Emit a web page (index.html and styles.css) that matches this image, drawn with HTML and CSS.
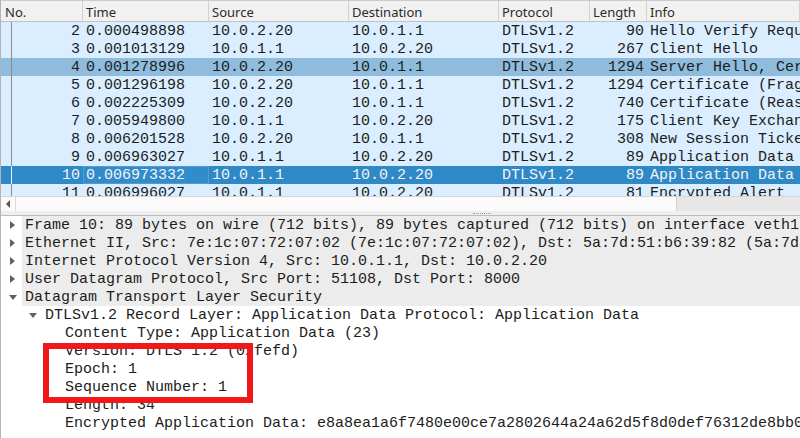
FILE: index.html
```html
<!DOCTYPE html>
<html>
<head>
<meta charset="utf-8">
<link rel="stylesheet" href="styles.css">
</head>
<body>
<div class="app">
  <div class="plist">
    <div class="prow head">
      <div class="c">No.</div><div class="c">Time</div><div class="c">Source</div><div class="c">Destination</div><div class="c">Protocol</div><div class="c">Length</div><div class="c">Info</div>
    </div>
    <div class="prow"><div class="c r no">2</div><div class="c">0.000498898</div><div class="c">10.0.2.20</div><div class="c">10.0.1.1</div><div class="c">DTLSv1.2</div><div class="c r">90</div><div class="c">Hello Verify Request</div></div>
    <div class="prow"><div class="c r no">3</div><div class="c">0.001013129</div><div class="c">10.0.1.1</div><div class="c">10.0.2.20</div><div class="c">DTLSv1.2</div><div class="c r">267</div><div class="c">Client Hello</div></div>
    <div class="prow hover"><div class="c r no">4</div><div class="c">0.001278996</div><div class="c">10.0.2.20</div><div class="c">10.0.1.1</div><div class="c">DTLSv1.2</div><div class="c r">1294</div><div class="c">Server Hello, Certificate (Fragment)</div></div>
    <div class="prow"><div class="c r no">5</div><div class="c">0.001296198</div><div class="c">10.0.2.20</div><div class="c">10.0.1.1</div><div class="c">DTLSv1.2</div><div class="c r">1294</div><div class="c">Certificate (Fragment)</div></div>
    <div class="prow"><div class="c r no">6</div><div class="c">0.002225309</div><div class="c">10.0.2.20</div><div class="c">10.0.1.1</div><div class="c">DTLSv1.2</div><div class="c r">740</div><div class="c">Certificate (Reassembled)</div></div>
    <div class="prow"><div class="c r no">7</div><div class="c">0.005949800</div><div class="c">10.0.1.1</div><div class="c">10.0.2.20</div><div class="c">DTLSv1.2</div><div class="c r">175</div><div class="c">Client Key Exchange, Change Cipher Spec</div></div>
    <div class="prow"><div class="c r no">8</div><div class="c">0.006201528</div><div class="c">10.0.2.20</div><div class="c">10.0.1.1</div><div class="c">DTLSv1.2</div><div class="c r">308</div><div class="c">New Session Ticket, Change Cipher Spec</div></div>
    <div class="prow"><div class="c r no">9</div><div class="c">0.006963027</div><div class="c">10.0.1.1</div><div class="c">10.0.2.20</div><div class="c">DTLSv1.2</div><div class="c r">89</div><div class="c">Application Data</div></div>
    <div class="prow sel"><div class="c r no">10</div><div class="c focus">0.006973332</div><div class="c">10.0.1.1</div><div class="c">10.0.2.20</div><div class="c">DTLSv1.2</div><div class="c r">89</div><div class="c">Application Data</div></div>
    <div class="prow"><div class="c r no">11</div><div class="c">0.006996027</div><div class="c">10.0.1.1</div><div class="c">10.0.2.20</div><div class="c">DTLSv1.2</div><div class="c r">81</div><div class="c">Encrypted Alert</div></div>
  </div>
  <div class="hscroll">
    <div class="sbtn"><span class="larrow"></span></div>
    <div class="strack"></div>
    <div class="sthumb"></div>
  </div>
  <div class="splitter"><span class="grip"></span></div>
  <div class="details">
    <div class="drow top"><span class="arr right"></span><span class="lbl">Frame 10: 89 bytes on wire (712 bits), 89 bytes captured (712 bits) on interface veth1, id 0</span></div>
    <div class="drow top"><span class="arr right"></span><span class="lbl">Ethernet II, Src: 7e:1c:07:72:07:02 (7e:1c:07:72:07:02), Dst: 5a:7d:51:b6:39:82 (5a:7d:51:b6:39:82)</span></div>
    <div class="drow top"><span class="arr right"></span><span class="lbl">Internet Protocol Version 4, Src: 10.0.1.1, Dst: 10.0.2.20</span></div>
    <div class="drow top"><span class="arr right"></span><span class="lbl">User Datagram Protocol, Src Port: 51108, Dst Port: 8000</span></div>
    <div class="drow top"><span class="arr down"></span><span class="lbl">Datagram Transport Layer Security</span></div>
    <div class="drow l1"><span class="arr down"></span><span class="lbl">DTLSv1.2 Record Layer: Application Data Protocol: Application Data</span></div>
    <div class="drow l2"><span class="arr"></span><span class="lbl">Content Type: Application Data (23)</span></div>
    <div class="drow l2"><span class="arr"></span><span class="lbl">Version: DTLS 1.2 (0xfefd)</span></div>
    <div class="drow l2"><span class="arr"></span><span class="lbl">Epoch: 1</span></div>
    <div class="drow l2"><span class="arr"></span><span class="lbl">Sequence Number: 1</span></div>
    <div class="drow l2"><span class="arr"></span><span class="lbl">Length: 34</span></div>
    <div class="drow l2"><span class="arr"></span><span class="lbl">Encrypted Application Data: e8a8ea1a6f7480e00ce7a2802644a24a62d5f8d0def76312de8bb0c5a2</span></div>
  </div>
  <div class="redbox"></div>
</div>
</body>
</html>
```
FILE: styles.css
```css
html, body {
  margin: 0;
  padding: 0;
  background: #ffffff;
}
.app {
  position: relative;
  width: 800px;
  height: 438px;
  overflow: hidden;
  box-sizing: border-box;
  border-left: 1px solid #b4b4b4;
  font-family: "Liberation Mono", monospace;
  font-size: 15px;
  color: #1c1c1c;
}
.plist {
  height: 196px;
  overflow: hidden;
  background: #ffffff;
}
.prow {
  display: grid;
  grid-template-columns: 82px 126px 140px 150px 91px 57px 1fr;
  height: 18px;
  line-height: 17px;
  padding-top: 1px;
  box-sizing: border-box;
  background: #daeeff;
  white-space: nowrap;
}
.prow .c {
  overflow: hidden;
  padding-left: 3px;
  box-sizing: border-box;
}
.prow .c.r {
  text-align: right;
  padding-left: 0;
  padding-right: 3px;
}
.prow .c.no {
  background-image: linear-gradient(to right, transparent 10px, #8a8a8a 10px, #8a8a8a 11px, transparent 11px);
  margin-top: -1px;
  padding-top: 1px;
}
.prow.head {
  height: 22px;
  line-height: 20px;
  padding-top: 1px;
  border-top: 1px solid #cacaca;
  border-bottom: 1px solid #c2c2c2;
  background: #f1f1f1;
  font-family: "Noto Sans", sans-serif;
  font-size: 13px;
  color: #2a2a2a;
}
.prow.head .c {
  border-right: 1px solid #d2d2d2;
  padding-left: 3px;
  margin-top: -1px;
  padding-top: 1px;
}
.prow.head .c:first-child {
  padding-left: 4px;
}
.prow.hover {
  background: #8fbcdc;
}
.prow.sel {
  background: #2f89c7;
  color: #f4f4f4;
}
.prow.sel .c.no {
  background-image: linear-gradient(to right, transparent 10px, #e8f2fa 10px, #e8f2fa 11px, transparent 11px);
}
.prow.sel .c.focus {
  box-shadow: inset 0 0 0 1px #4f9bd2;
  background: #338cca;
  margin-top: -1px;
  padding-top: 1px;
}
.hscroll {
  display: flex;
  height: 15px;
  box-sizing: border-box;
  border-top: 1px solid #d6d6d6;
  background: #fbfbfb;
}
.sbtn {
  width: 15px;
  display: flex;
  align-items: center;
  justify-content: center;
  border-right: 1px solid #dcdcdc;
  box-sizing: border-box;
}
.larrow {
  width: 0;
  height: 0;
  border-top: 4px solid transparent;
  border-bottom: 4px solid transparent;
  border-right: 4px solid #555555;
}
.strack {
  flex: 0 0 660px;
}
.sthumb {
  flex: 1;
  background: #e7e7e7;
  border-left: 1px solid #cfcfcf;
}
.splitter {
  height: 5px;
  box-sizing: border-box;
  background: #efefef;
  border-bottom: 1px solid #bcbcbc;
  padding-left: 472px;
  padding-top: 2px;
}
.grip {
  display: block;
  width: 18px;
  height: 0;
  border-top: 1px dotted #9a9a9a;
}
.details {
  background: #ffffff;
}
.drow {
  display: flex;
  height: 18px;
  line-height: 18px;
  white-space: nowrap;
}
.drow.l1 { padding-left: 20px; }
.drow.l2 { padding-left: 40px; }
.arr {
  flex: 0 0 21px;
  display: flex;
  align-items: center;
  padding-left: 8px;
  box-sizing: border-box;
}
.arr.right::before {
  content: "";
  width: 0;
  height: 0;
  border-top: 4px solid transparent;
  border-bottom: 4px solid transparent;
  border-left: 5px solid #606060;
  margin-left: 1px;
}
.arr.down::before {
  content: "";
  width: 0;
  height: 0;
  border-left: 4px solid transparent;
  border-right: 4px solid transparent;
  border-top: 5px solid #606060;
}
.lbl {
  flex: 1;
  padding-left: 3px;
  padding-top: 2px;
  line-height: 16px;
  box-sizing: border-box;
  overflow: hidden;
}
.drow.top .lbl {
  background: #ececec;
}
.redbox {
  position: absolute;
  left: 42px;
  top: 343px;
  width: 210px;
  height: 60px;
  box-sizing: border-box;
  border: 6px solid #f01818;
}
```
